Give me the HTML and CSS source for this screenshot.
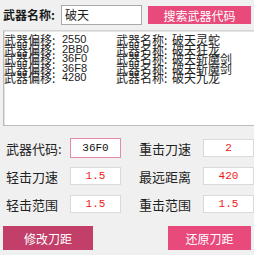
FILE: index.html
```html
<!DOCTYPE html>
<html>
<head>
<meta charset="utf-8">
<link rel="stylesheet" href="styles.css">
</head>
<body>
<div class="app">
  <div class="top">
    <span class="name-label">武器名称:</span>
    <div class="name-input">破天</div>
    <div class="btn btn-search">搜索武器代码</div>
  </div>
  <div class="list">
    <div class="row"><span class="c1">武器偏移:</span><span class="c2">2550</span><span class="c3">武器名称:</span><span class="c4">破天灵蛇</span></div>
    <div class="row"><span class="c1">武器偏移:</span><span class="c2">2BB0</span><span class="c3">武器名称:</span><span class="c4">破天狂龙</span></div>
    <div class="row"><span class="c1">武器偏移:</span><span class="c2">36F0</span><span class="c3">武器名称:</span><span class="c4">破天斩魔剑</span></div>
    <div class="row"><span class="c1">武器偏移:</span><span class="c2">36F8</span><span class="c3">武器名称:</span><span class="c4">破天斩魔剑</span></div>
    <div class="row"><span class="c1">武器偏移:</span><span class="c2">4280</span><span class="c3">武器名称:</span><span class="c4">破天九龙</span></div>
  </div>
  <div class="form">
    <span class="lbl">武器代码:</span><div class="field code">36F0</div>
    <span class="lbl lbl-r">重击刀速</span><div class="field red">2</div>
    <span class="lbl">轻击刀速</span><div class="field red">1.5</div>
    <span class="lbl lbl-r">最远距离</span><div class="field red">420</div>
    <span class="lbl">轻击范围</span><div class="field red">1.5</div>
    <span class="lbl lbl-r">重击范围</span><div class="field red">1.5</div>
  </div>
  <div class="actions">
    <div class="btn btn-modify">修改刀距</div>
    <div class="btn btn-restore">还原刀距</div>
  </div>
</div>
</body>
</html>
```
FILE: styles.css
```css
* { box-sizing: border-box; }
html, body { margin: 0; padding: 0; }
body {
  width: 254px;
  height: 255px;
  overflow: hidden;
  background: #f0f0f0;
  font-family: "Noto Sans CJK SC", "Noto Sans", sans-serif;
  color: #1a1a1a;
}
.app { width: 254px; }
.top {
  display: flex;
  align-items: center;
  padding: 5px 0 0 3px;
  height: 25px;
}
.name-label {
  width: 58px;
  font-size: 12px;
  font-weight: bold;
  line-height: 20px;
}
.name-input {
  width: 81px;
  height: 20px;
  background: #fff;
  border: 1px solid #a9a9a9;
  font-size: 12px;
  line-height: 18px;
  padding-left: 3px;
}
.btn {
  color: #fff;
  font-size: 12px;
  display: flex;
  align-items: center;
  justify-content: center;
}
.btn-search {
  margin-left: 6px;
  width: 103px;
  height: 18px;
  background: #e84a7c;
}
.list {
  margin: 5px 0 0 3px;
  height: 96px;
  width: 260px;
  background: #fff;
  border-top: 1px solid #d4d4d4;
  border-left: 1px solid #bcbcbc;
  border-bottom: 1px solid #bcbcbc;
  box-shadow: inset 1px 1px 0 #e4e4e4;
  padding-top: 4px;
  font-size: 12px;
  line-height: 9.6px;
}
.row {
  display: grid;
  grid-template-columns: 58px 54px 56px auto;
  height: 9.6px;
  white-space: nowrap;
  color: #222;
}
.c2 { font-family: "Liberation Sans", sans-serif; font-size: 11px; }
.form {
  display: grid;
  grid-template-columns: 64px 51px 18px 64px 51px;
  grid-auto-rows: 28px;
  align-items: center;
  padding: 8px 0 0 6px;
}
.lbl { font-size: 13px; color: #222; }
.lbl-r { grid-column: 4; }
.field {
  height: 18px;
  background: #fff;
  border: 1px solid #dadada;
  text-align: center;
  font-size: 11px;
  line-height: 16px;
  font-family: "Liberation Mono", monospace;
}
.field.code {
  height: 20px;
  line-height: 18px;
  border: 1px solid #e58aa8;
  color: #111;
}
.red { color: #f01818; }
.actions {
  display: flex;
  justify-content: space-between;
  padding: 8px 3px 0 3px;
}
.btn-modify {
  width: 90px;
  height: 24px;
  background: #c23f69;
}
.btn-restore {
  width: 83px;
  height: 24px;
  background: #e84a7c;
}
```
